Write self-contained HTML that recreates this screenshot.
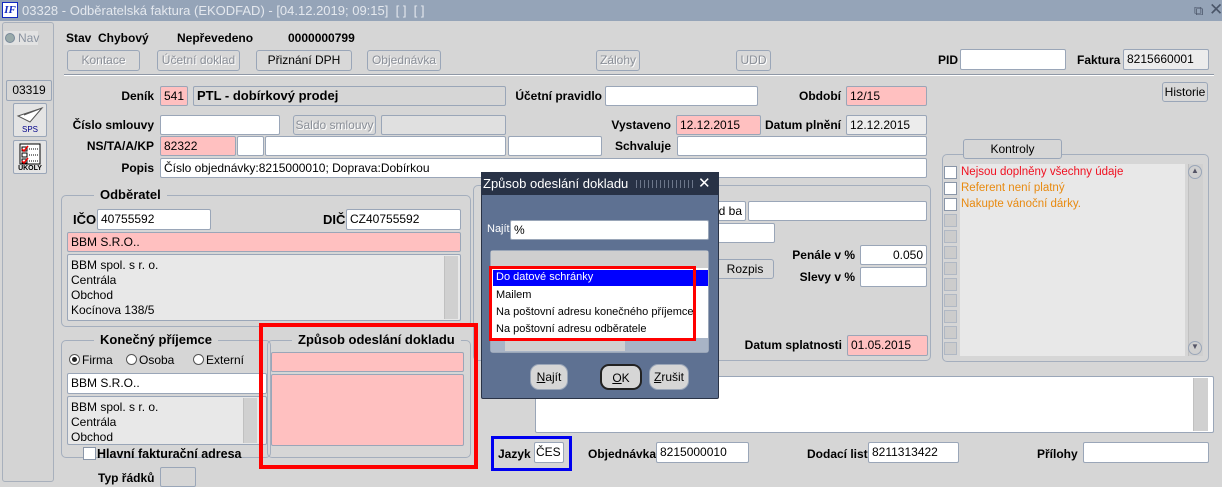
<!DOCTYPE html>
<html><head><meta charset="utf-8"><style>
*{box-sizing:border-box;margin:0;padding:0}
body{width:1222px;height:476px;overflow:hidden;background:#d6d6d6;font-family:"Liberation Sans",Arial,sans-serif;font-size:12px;color:#000;position:relative}
.a{position:absolute}
.l{position:absolute;font-weight:bold;white-space:nowrap;text-align:right}
.i{position:absolute;background:#fff;border:1px solid #9aa6b8;border-radius:2px;padding:2px 3px;white-space:nowrap;overflow:hidden;line-height:14px}
.p{background:#ffc0c0}
.g{background:#ececec}
.b{position:absolute;border:1px solid #9aa6b8;border-radius:3px;background:#d8d8d8;text-align:center;line-height:18px;color:#8a8f98;text-shadow:1px 1px 0 #fff}
.b.k{color:#000;text-shadow:none}
.grp{position:absolute;border:1px solid #a4aebd;border-radius:5px}
.gt{position:absolute;background:#d6d6d6;font-weight:bold;padding:0 6px;font-size:13px}
.sb{position:absolute;background:#d0d0d0;border-left:1px solid #c0c0c0}
.cb{position:absolute;width:13px;height:13px;border:1px solid #8a96a8;background:#fff}
</style></head><body>
<!-- title bar -->
<div class="a" style="left:0;top:0;width:1222px;height:21px;background:#95a4b8"></div>
<div class="a" style="left:2px;top:2px;width:16px;height:16px;background:#fff;border:1px solid #1028c0;color:#1028c0;font:bold italic 11px 'Liberation Serif',serif;text-align:center;line-height:14px">IF</div>
<div class="a" style="left:22px;top:3px;color:#e4e8ee;font-size:13px;white-space:nowrap">03328 - Odběratelská faktura (EKODFAD) - [04.12.2019; 09:15]&nbsp; [ ]&nbsp; [ ]</div>
<div class="a" style="left:1194px;top:3px;color:#4a5568;font-size:13px">&#x29C9;</div>
<div class="a" style="left:1209px;top:0px;color:#4a5568;font-size:17px">✕</div>
<!-- sidebar -->
<div class="a" style="left:2px;top:22px;width:52px;height:460px;border:1px solid #a8b0bc;border-radius:3px;background:#d4d4d4"></div>
<div class="a" style="left:4px;top:31px;width:34px;height:14px;background:#e2e2e2"></div>
<div class="a" style="left:5px;top:33px;width:10px;height:10px;border-radius:50%;background:#9aa;border:1px solid #789"></div>
<div class="a" style="left:18px;top:31px;color:#8a93a0">Nav</div>
<div class="i" style="left:6px;top:80px;width:46px;height:21px;background:#d6d6d6;text-align:center;font-size:12px">03319</div>
<div class="a" style="left:13px;top:103px;width:34px;height:34px;border:1px solid #9aa6b8;border-radius:2px;background:#e4e4e4;text-align:center;font-size:8px;color:#00008b;padding-top:21px">SPS</div>
<svg class="a" style="left:16px;top:106px" width="28" height="18"><path d="M2 10 L26 2 L14 16 Z M8 9 L26 2" fill="#fff" stroke="#555"/></svg>
<div class="a" style="left:13px;top:140px;width:34px;height:34px;border:1px solid #9aa6b8;border-radius:2px;background:#e4e4e4;text-align:center;font:bold 7px sans-serif;padding-top:24px">ÚKOLY</div>
<svg class="a" style="left:19px;top:143px" width="22" height="22"><rect x="1" y="1" width="20" height="20" fill="#fff" stroke="#000"/><rect x="3" y="4" width="5" height="4" fill="none" stroke="#000"/><rect x="3" y="10" width="5" height="4" fill="none" stroke="#000"/><rect x="3" y="16" width="5" height="4" fill="none" stroke="#000"/><path d="M3 6l2 2 4-5M3 18l2 2 4-5" stroke="#e00" fill="none" stroke-width="1.5"/><path d="M10 6h9M10 12h9M10 18h9" stroke="#000" stroke-dasharray="1 1"/></svg>
<!-- top row -->
<div class="l" style="left:66px;top:31px;font-size:12px">Stav&nbsp; Chybový</div>
<div class="l" style="left:177px;top:31px">Nepřevedeno</div>
<div class="l" style="left:288px;top:31px">0000000799</div>
<div class="b" style="left:67px;top:50px;width:73px;height:21px">Kontace</div>
<div class="b" style="left:157px;top:50px;width:83px;height:21px">Účetní doklad</div>
<div class="b k" style="left:256px;top:50px;width:96px;height:21px">Přiznání DPH</div>
<div class="b" style="left:367px;top:50px;width:74px;height:21px">Objednávka</div>
<div class="b" style="left:596px;top:50px;width:44px;height:21px">Zálohy</div>
<div class="b" style="left:736px;top:50px;width:35px;height:21px">UDD</div>
<div class="l" style="left:938px;top:53px">PID</div>
<div class="i" style="left:960px;top:49px;width:106px;height:21px"></div>
<div class="l" style="left:1077px;top:53px">Faktura</div>
<div class="i g" style="left:1123px;top:49px;width:86px;height:21px">8215660001</div>
<div class="a" style="left:64px;top:74px;width:1150px;height:2px;background:#8f98a6;border-bottom:1px solid #fff"></div>
<!-- row Denik -->
<div class="l" style="left:90px;top:89px;width:64px">Deník</div>
<div class="i p" style="left:160px;top:86px;width:28px;height:20px">541</div>
<div class="i" style="left:193px;top:86px;width:313px;height:20px;background:#d6d6d6;font-weight:bold;font-size:13px">PTL - dobírkový prodej</div>
<div class="l" style="left:510px;top:89px;width:92px">Účetní pravidlo</div>
<div class="i" style="left:605px;top:86px;width:153px;height:20px"></div>
<div class="l" style="left:770px;top:89px;width:71px">Období</div>
<div class="i p" style="left:846px;top:86px;width:81px;height:20px">12/15</div>
<div class="b k" style="left:1162px;top:82px;width:46px;height:20px">Historie</div>
<!-- row smlouva -->
<div class="l" style="left:60px;top:118px;width:94px">Číslo smlouvy</div>
<div class="i" style="left:160px;top:115px;width:120px;height:20px"></div>
<div class="b" style="left:293px;top:115px;width:83px;height:20px">Saldo smlouvy</div>
<div class="i g" style="left:381px;top:115px;width:125px;height:20px;background:#e0e0e0"></div>
<div class="l" style="left:600px;top:118px;width:71px">Vystaveno</div>
<div class="i p" style="left:676px;top:115px;width:85px;height:20px">12.12.2015</div>
<div class="l" style="left:760px;top:118px;width:81px">Datum plnění</div>
<div class="i g" style="left:846px;top:115px;width:81px;height:20px">12.12.2015</div>
<!-- row NS -->
<div class="l" style="left:60px;top:139px;width:94px">NS/TA/A/KP</div>
<div class="i p" style="left:160px;top:136px;width:76px;height:20px">82322</div>
<div class="i" style="left:237px;top:136px;width:27px;height:20px"></div>
<div class="i" style="left:265px;top:136px;width:241px;height:20px"></div>
<div class="i" style="left:508px;top:136px;width:94px;height:20px"></div>
<div class="l" style="left:600px;top:139px;width:71px">Schvaluje</div>
<div class="i" style="left:677px;top:136px;width:250px;height:20px"></div>
<div class="l" style="left:60px;top:161px;width:94px">Popis</div>
<div class="i" style="left:160px;top:158px;width:767px;height:20px">Číslo objednávky:8215000010; Doprava:Dobírkou</div>
<!-- Kontroly -->
<div class="grp" style="left:942px;top:154px;width:267px;height:208px"></div>
<div class="b k" style="left:963px;top:139px;width:99px;height:20px;background:#d6d6d6">Kontroly</div>
<div class="a" style="left:960px;top:164px;width:225px;height:192px;background:#e8e8e8"></div>
<div class="sb" style="left:1188px;top:164px;width:15px;height:192px"></div>
<div class="a" style="left:1188px;top:165px;width:14px;height:14px;border:1px solid #9aa6b8;border-radius:7px;font-size:8px;text-align:center;color:#556">▲</div>
<div class="a" style="left:1188px;top:341px;width:14px;height:14px;border:1px solid #9aa6b8;border-radius:7px;font-size:8px;text-align:center;color:#556">▼</div>
<div class="cb" style="left:944px;top:166px"></div><div class="cb" style="left:944px;top:182px"></div><div class="cb" style="left:944px;top:198px"></div>
<div class="cb" style="left:944px;top:214px;background:#ccc;border-color:#b0b8c4"></div><div class="cb" style="left:944px;top:230px;background:#ccc;border-color:#b0b8c4"></div><div class="cb" style="left:944px;top:246px;background:#ccc;border-color:#b0b8c4"></div><div class="cb" style="left:944px;top:262px;background:#ccc;border-color:#b0b8c4"></div><div class="cb" style="left:944px;top:278px;background:#ccc;border-color:#b0b8c4"></div><div class="cb" style="left:944px;top:294px;background:#ccc;border-color:#b0b8c4"></div><div class="cb" style="left:944px;top:310px;background:#ccc;border-color:#b0b8c4"></div><div class="cb" style="left:944px;top:326px;background:#ccc;border-color:#b0b8c4"></div><div class="cb" style="left:944px;top:342px;background:#ccc;border-color:#b0b8c4"></div>
<div class="a" style="left:961px;top:166px;color:#f01020;font-size:11.5px">Nejsou doplněny všechny údaje</div>
<div class="a" style="left:961px;top:182px;color:#e88a10;font-size:11.5px">Referent není platný</div>
<div class="a" style="left:961px;top:198px;color:#e88a10;font-size:11.5px">Nakupte vánoční dárky.</div>
<!-- middle right group -->
<div class="grp" style="left:473px;top:185px;width:458px;height:176px"></div>
<div class="i" style="left:700px;top:201px;width:46px;height:20px;padding-left:5px">kód ba</div>
<div class="i" style="left:748px;top:201px;width:179px;height:20px"></div>
<div class="i" style="left:700px;top:223px;width:75px;height:20px"></div>
<div class="b k" style="left:716px;top:259px;width:58px;height:20px">Rozpis</div>
<div class="l" style="left:780px;top:248px;width:75px">Penále v %</div>
<div class="i" style="left:860px;top:245px;width:67px;height:20px;text-align:right">0.050</div>
<div class="l" style="left:780px;top:270px;width:75px">Slevy v %</div>
<div class="i" style="left:860px;top:267px;width:67px;height:20px"></div>
<div class="l" style="left:740px;top:338px;width:102px">Datum splatnosti</div>
<div class="i p" style="left:847px;top:335px;width:81px;height:21px">01.05.2015</div>
<!-- Odberatel -->
<div class="grp" style="left:61px;top:195px;width:410px;height:132px"></div>
<div class="gt" style="left:94px;top:187px">Odběratel</div>
<div class="l" style="left:73px;top:212px;font-size:13px">IČO</div>
<div class="i" style="left:97px;top:209px;width:114px;height:21px">40755592</div>
<div class="l" style="left:323px;top:212px;font-size:13px">DIČ</div>
<div class="i" style="left:346px;top:209px;width:115px;height:21px">CZ40755592</div>
<div class="i p" style="left:67px;top:232px;width:394px;height:20px">BBM S.R.O..</div>
<div class="i" style="left:67px;top:254px;width:394px;height:67px;background:#e8e8e8;line-height:15px;padding-top:3px">BBM spol. s r. o.<br>Centrála<br>Obchod<br>Kocínova 138/5</div>
<div class="sb" style="left:444px;top:256px;width:14px;height:63px"></div>
<!-- Konecny prijemce -->
<div class="grp" style="left:61px;top:340px;width:210px;height:118px"></div>
<div class="gt" style="left:94px;top:332px">Konečný příjemce</div>
<div class="a" style="left:69px;top:354px;width:11px;height:11px;border-radius:50%;border:1px solid #555;background:#fff"><div style="margin:2px;width:5px;height:5px;border-radius:50%;background:#222"></div></div>
<div class="a" style="left:82px;top:353px">Firma</div>
<div class="a" style="left:126px;top:354px;width:11px;height:11px;border-radius:50%;border:1px solid #555;background:#fff"></div>
<div class="a" style="left:139px;top:353px">Osoba</div>
<div class="a" style="left:193px;top:354px;width:11px;height:11px;border-radius:50%;border:1px solid #555;background:#fff"></div>
<div class="a" style="left:206px;top:353px">Externí</div>
<div class="i" style="left:67px;top:373px;width:200px;height:21px">BBM S.R.O..</div>
<div class="i" style="left:67px;top:396px;width:200px;height:49px;background:#e8e8e8;line-height:15px;padding-top:3px">BBM spol. s r. o.<br>Centrála<br>Obchod</div>
<div class="sb" style="left:243px;top:398px;width:14px;height:45px"></div>
<div class="cb" style="left:83px;top:447px"></div>
<div class="l" style="left:97px;top:447px;font-size:12.5px">Hlavní fakturační adresa</div>
<div class="a" style="left:98px;top:471px;font-weight:bold">Typ řádků</div>
<div class="i" style="left:160px;top:467px;width:36px;height:20px;background:#d6d6d6"></div>
<!-- Zpusob red box -->
<div class="grp" style="left:267px;top:340px;width:204px;height:118px"></div>
<div class="gt" style="left:292px;top:332px">Způsob odeslání dokladu</div>
<div class="i p" style="left:271px;top:352px;width:193px;height:20px"></div>
<div class="i p" style="left:271px;top:374px;width:193px;height:72px"></div>
<div class="a" style="left:259px;top:323px;width:219px;height:146px;border:4px solid #f00"></div>
<!-- big text area -->
<div class="i" style="left:535px;top:376px;width:679px;height:57px"></div>
<div class="sb" style="left:1193px;top:378px;width:15px;height:53px"></div>
<!-- bottom row -->
<div class="a" style="left:491px;top:436px;width:81px;height:35px;border:3px solid #0000f0"></div>
<div class="l" style="left:498px;top:447px">Jazyk</div>
<div class="i" style="left:534px;top:442px;width:30px;height:21px;padding:2px 1px">ČES</div>
<div class="l" style="left:588px;top:447px">Objednávka</div>
<div class="i" style="left:656px;top:442px;width:93px;height:21px">8215000010</div>
<div class="l" style="left:807px;top:447px">Dodací list</div>
<div class="i" style="left:868px;top:442px;width:91px;height:21px">8211313422</div>
<div class="l" style="left:1037px;top:447px">Přílohy</div>
<div class="i" style="left:1083px;top:442px;width:126px;height:21px"></div>
<!-- dialog -->
<div class="a" style="left:481px;top:172px;width:238px;height:227px;background:#5e7192;border:1px solid #2a3346;border-radius:2px"></div>
<div class="a" style="left:481px;top:172px;width:238px;height:23px;background:#283246"></div>
<div class="a" style="left:483px;top:176px;color:#fff;font-size:13px;white-space:nowrap">Způsob odeslání dokladu</div>
<div class="a" style="left:636px;top:180px;width:58px;height:8px;background:repeating-linear-gradient(90deg,#8a94a8 0 1px,transparent 1px 4px);opacity:.7"></div>
<div class="a" style="left:698px;top:174px;color:#fff;font-size:15px">✕</div>
<div class="a" style="left:487px;top:223px;color:#fff;font-size:11px">Najít</div>
<div class="i" style="left:510px;top:220px;width:199px;height:20px">%</div>
<div class="a" style="left:490px;top:250px;width:219px;height:103px;background:#fff;border:1px solid #9aa6b8;border-radius:3px"></div>
<div class="a" style="left:491px;top:251px;width:217px;height:17px;background:#cfcfcf"></div>
<div class="a" style="left:493px;top:270px;width:215px;height:16px;background:#0000ff"></div>
<div class="a" style="left:496px;top:271px;color:#fff;font-size:11px">Do datové schránky</div>
<div class="a" style="left:496px;top:289px;font-size:11px">Mailem</div>
<div class="a" style="left:496px;top:306px;font-size:11px">Na poštovní adresu konečného příjemce</div>
<div class="a" style="left:496px;top:323px;font-size:11px">Na poštovní adresu odběratele</div>
<div class="a" style="left:491px;top:338px;width:217px;height:14px;background:#a8b4c6"></div>
<div class="a" style="left:505px;top:339px;width:120px;height:12px;background:#d0d0d0"></div>
<div class="a" style="left:489px;top:266px;width:207px;height:75px;border:3px solid #f00"></div>
<div class="b k" style="left:530px;top:364px;width:38px;height:26px;border-radius:9px;line-height:24px;background:#d6d6d6"><u>N</u>ajít</div>
<div class="b k" style="left:600px;top:364px;width:42px;height:26px;border-radius:9px;line-height:24px;background:#d6d6d6;border:2px solid #222"><u>O</u>K</div>
<div class="b k" style="left:649px;top:364px;width:40px;height:26px;border-radius:9px;line-height:24px;background:#d6d6d6"><u>Z</u>rušit</div>
</body></html>
